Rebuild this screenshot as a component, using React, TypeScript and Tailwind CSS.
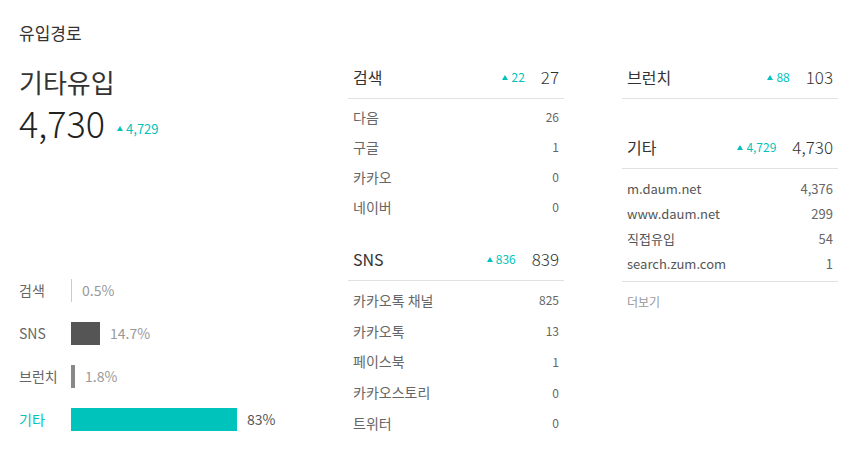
import React from "react";

const TEAL = "#00c3bc";

function Tri({ w = 6, h = 5 }: { w?: number; h?: number }) {
  return (
    <svg width={w} height={h} viewBox="0 0 6 5" className="block">
      <polygon points="3,0 6,5 0,5" fill={TEAL} />
    </svg>
  );
}

function Delta({ v }: { v: string }) {
  return (
    <span className="flex items-center gap-[3px] text-[12px] text-[#00c3bc] leading-none">
      <Tri />
      <span>{v}</span>
    </span>
  );
}

function Header({ title, delta, total, className = "" }: { title: string; delta: string; total: string; className?: string }) {
  return (
    <div className={`flex h-[43px] items-center border-b border-[#e1e1e1] px-[5px] ${className}`}>
      <span className="flex-1 text-[16px] text-[#333]">{title}</span>
      <Delta v={delta} />
      <span className="ml-[16px] text-[17px] font-light text-[#333]">{total}</span>
    </div>
  );
}

function Row({ label, value, h, size }: { label: string; value: string; h: string; size: "md" | "sm" }) {
  return (
    <div className={`flex items-center justify-between px-[5px] ${h}`}>
      <span className={size === "md" ? "text-[14px] text-[#666]" : "text-[13px] text-[#555]"}>{label}</span>
      <span className={size === "md" ? "text-[12px] text-[#666]" : "text-[13px] text-[#666]"}>{value}</span>
    </div>
  );
}

const bars = [
  { label: "검색", pct: 0.5, text: "0.5%", color: "#cccccc", active: false },
  { label: "SNS", pct: 14.7, text: "14.7%", color: "#555555", active: false },
  { label: "브런치", pct: 1.8, text: "1.8%", color: "#888888", active: false },
  { label: "기타", pct: 83, text: "83%", color: TEAL, active: true },
];

export default function App() {
  return (
    <div className="w-[857px] h-[470px] bg-white pl-[19px] pt-[20px] font-['Noto_Sans_CJK_KR','Noto_Sans',sans-serif] text-[#333]">
      <div className="h-[36px] text-[17px] leading-[26px] text-[#333]">유입경로</div>
      <div className="flex">
        {/* Left */}
        <div className="w-[329px] flex flex-col">
          <div className="mt-[9px] h-[34px] text-[26px] leading-[34px] text-[#333]">기타유입</div>
          <div className="mt-[2px] flex items-end h-[42px]">
            <div className="text-[36px] leading-[42px] font-light text-[#222]">4,730</div>
            <div className="ml-[12px] mb-[8px] flex items-center gap-[3px] text-[13px] leading-none text-[#00c3bc]">
              <Tri />
              <span>4,729</span>
            </div>
          </div>
          <div className="mt-[126px] flex flex-col">
            {bars.map((b) => (
              <div key={b.label} className="flex h-[43px] items-center">
                <span className={`w-[52px] text-[14px] ${b.active ? "text-[#00c3bc]" : "text-[#666]"}`}>{b.label}</span>
                <div className="h-[23px]" style={{ width: Math.max(1, Math.round(b.pct * 2)), backgroundColor: b.color }} />
                <span className={`ml-[10px] text-[14px] ${b.active ? "text-[#555]" : "text-[#999]"}`}>{b.text}</span>
              </div>
            ))}
          </div>
        </div>

        {/* Middle */}
        <div className="w-[216px] flex flex-col">
          <Header title="검색" delta="22" total="27" />
          <div className="pt-[3px]">
            {[["다음", "26"], ["구글", "1"], ["카카오", "0"], ["네이버", "0"]].map(([l, v]) => (
              <Row key={l} label={l} value={v} h="h-[30px]" size="md" />
            ))}
          </div>
          <Header title="SNS" delta="836" total="839" className="mt-[16px]" />
          <div className="pt-[4px]">
            {[["카카오톡 채널", "825"], ["카카오톡", "13"], ["페이스북", "1"], ["카카오스토리", "0"], ["트위터", "0"]].map(([l, v]) => (
              <Row key={l} label={l} value={v} h="h-[30.75px]" size="md" />
            ))}
          </div>
        </div>

        {/* Right */}
        <div className="ml-[58px] w-[216px] flex flex-col">
          <Header title="브런치" delta="88" total="103" />
          <Header title="기타" delta="4,729" total="4,730" className="mt-[27px]" />
          <div className="pt-[7px] pb-[5px] border-b border-[#e1e1e1]">
            {[["m.daum.net", "4,376"], ["www.daum.net", "299"], ["직접유입", "54"], ["search.zum.com", "1"]].map(([l, v]) => (
              <Row key={l} label={l} value={v} h="h-[25px]" size="sm" />
            ))}
          </div>
          <div className="px-[5px] h-[40px] flex items-center text-[12px] text-[#999]">더보기</div>
        </div>
      </div>
    </div>
  );
}
